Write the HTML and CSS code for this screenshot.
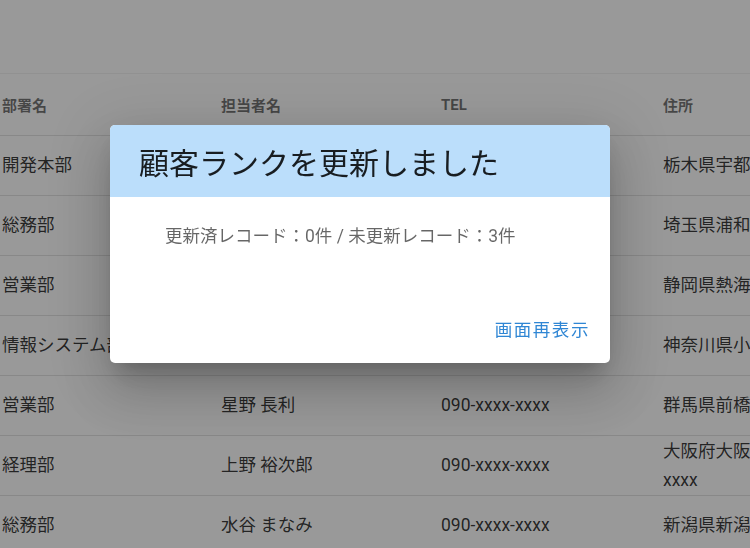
FILE: index.html
```html
<!DOCTYPE html>
<html lang="ja">
<head>
    <meta charset="UTF-8">
    <meta name="viewport" content="width=device-width, initial-scale=1.0">
    <title>顧客一覧</title>
    <link rel="stylesheet" href="styles.css">
</head>
<body>

    <div class="page">
        <table class="customers">
            <colgroup>
                <col class="col-dept">
                <col class="col-name">
                <col class="col-tel">
                <col class="col-addr">
            </colgroup>
            <thead>
                <tr>
                    <th>部署名</th>
                    <th>担当者名</th>
                    <th>TEL</th>
                    <th>住所</th>
                </tr>
            </thead>
            <tbody>
                <tr><td>開発本部</td><td>佐藤 健一</td><td>090-xxxx-xxxx</td><td>栃木県宇都宮市xxxx</td></tr>
                <tr><td>総務部</td><td>鈴木 花子</td><td>090-xxxx-xxxx</td><td>埼玉県浦和市xxxx</td></tr>
                <tr><td>営業部</td><td>高橋 誠</td><td>090-xxxx-xxxx</td><td>静岡県熱海市xxxx</td></tr>
                <tr><td>情報システム部</td><td>田中 美咲</td><td>090-xxxx-xxxx</td><td>神奈川県小田原市xxxx</td></tr>
                <tr><td>営業部</td><td>星野 長利</td><td>090-xxxx-xxxx</td><td>群馬県前橋市xxxx</td></tr>
                <tr><td>経理部</td><td>上野 裕次郎</td><td>090-xxxx-xxxx</td><td>大阪府大阪市中央区難波xxxx</td></tr>
                <tr><td>総務部</td><td>水谷 まなみ</td><td>090-xxxx-xxxx</td><td>新潟県新潟市xxxx</td></tr>
            </tbody>
        </table>
    </div>

    <div class="overlay">
        <div class="dialog">
            <div class="dialog-title">顧客ランクを更新しました</div>
            <div class="dialog-text">更新済レコード：0件 / 未更新レコード：3件</div>
            <div class="dialog-actions">
                <button class="text-btn">画面再表示</button>
            </div>
        </div>
    </div>

</body>
</html>
```

FILE: styles.css
```css
html, body {
    margin: 0;
    padding: 0;
    overflow: hidden;
}
body {
    font-family: Roboto, "Noto Sans CJK JP", sans-serif;
    background-color: #fff;
    color: rgba(0, 0, 0, 0.87);
    width: 750px;
    height: 548px;
}
.page {
    padding-top: 73px;
}
.customers {
    border-collapse: collapse;
    table-layout: fixed;
    width: 902px;
    margin-left: -18px;
    border-top: 1px solid rgba(0, 0, 0, 0.06);
}
.col-dept { width: 219px; }
.col-name { width: 220px; }
.col-tel { width: 222px; }
.col-addr { width: 241px; }
.customers th {
    height: 61px;
    padding: 0 20px;
    text-align: left;
    font-size: 15px;
    font-weight: bold;
    color: rgba(0, 0, 0, 0.6);
    border-bottom: 1px solid rgba(0, 0, 0, 0.12);
}
.customers td {
    height: 59px;
    padding: 0 20px;
    font-size: 17.5px;
    line-height: 29px;
    border-bottom: 1px solid rgba(0, 0, 0, 0.12);
    white-space: normal;
}
.customers td:first-child {
    white-space: nowrap;
}
.overlay {
    position: fixed;
    top: 0;
    left: 0;
    right: 0;
    bottom: 0;
    background: rgba(33, 33, 33, 0.46);
    display: flex;
    align-items: flex-start;
    padding: 125px 0 0 110px;
}
.dialog {
    width: 500px;
    height: 238px;
    background: #fff;
    border-radius: 5px;
    overflow: hidden;
    display: flex;
    flex-direction: column;
    box-shadow: 0 14px 19px -9px rgba(0, 0, 0, 0.2),
                0 30px 48px 4px rgba(0, 0, 0, 0.14),
                0 11px 58px 10px rgba(0, 0, 0, 0.12);
}
.dialog-title {
    height: 72px;
    flex: none;
    display: flex;
    align-items: center;
    padding: 0 28px 0 29px;
    background: #bbdefb;
    font-size: 30px;
    color: rgba(0, 0, 0, 0.87);
}
.dialog-text {
    padding: 28px 0 0 55px;
    font-size: 17.5px;
    line-height: 22px;
    color: rgba(0, 0, 0, 0.6);
}
.dialog-actions {
    margin-top: auto;
    display: flex;
    justify-content: flex-end;
    padding: 0 20px 22px;
}
.text-btn {
    height: 22px;
    padding: 0;
    border: none;
    background: none;
    font-family: Roboto, "Noto Sans CJK JP", sans-serif;
    font-size: 17.5px;
    line-height: 22px;
    letter-spacing: 0.09em;
    color: #2f86d4;
    cursor: pointer;
}
```
